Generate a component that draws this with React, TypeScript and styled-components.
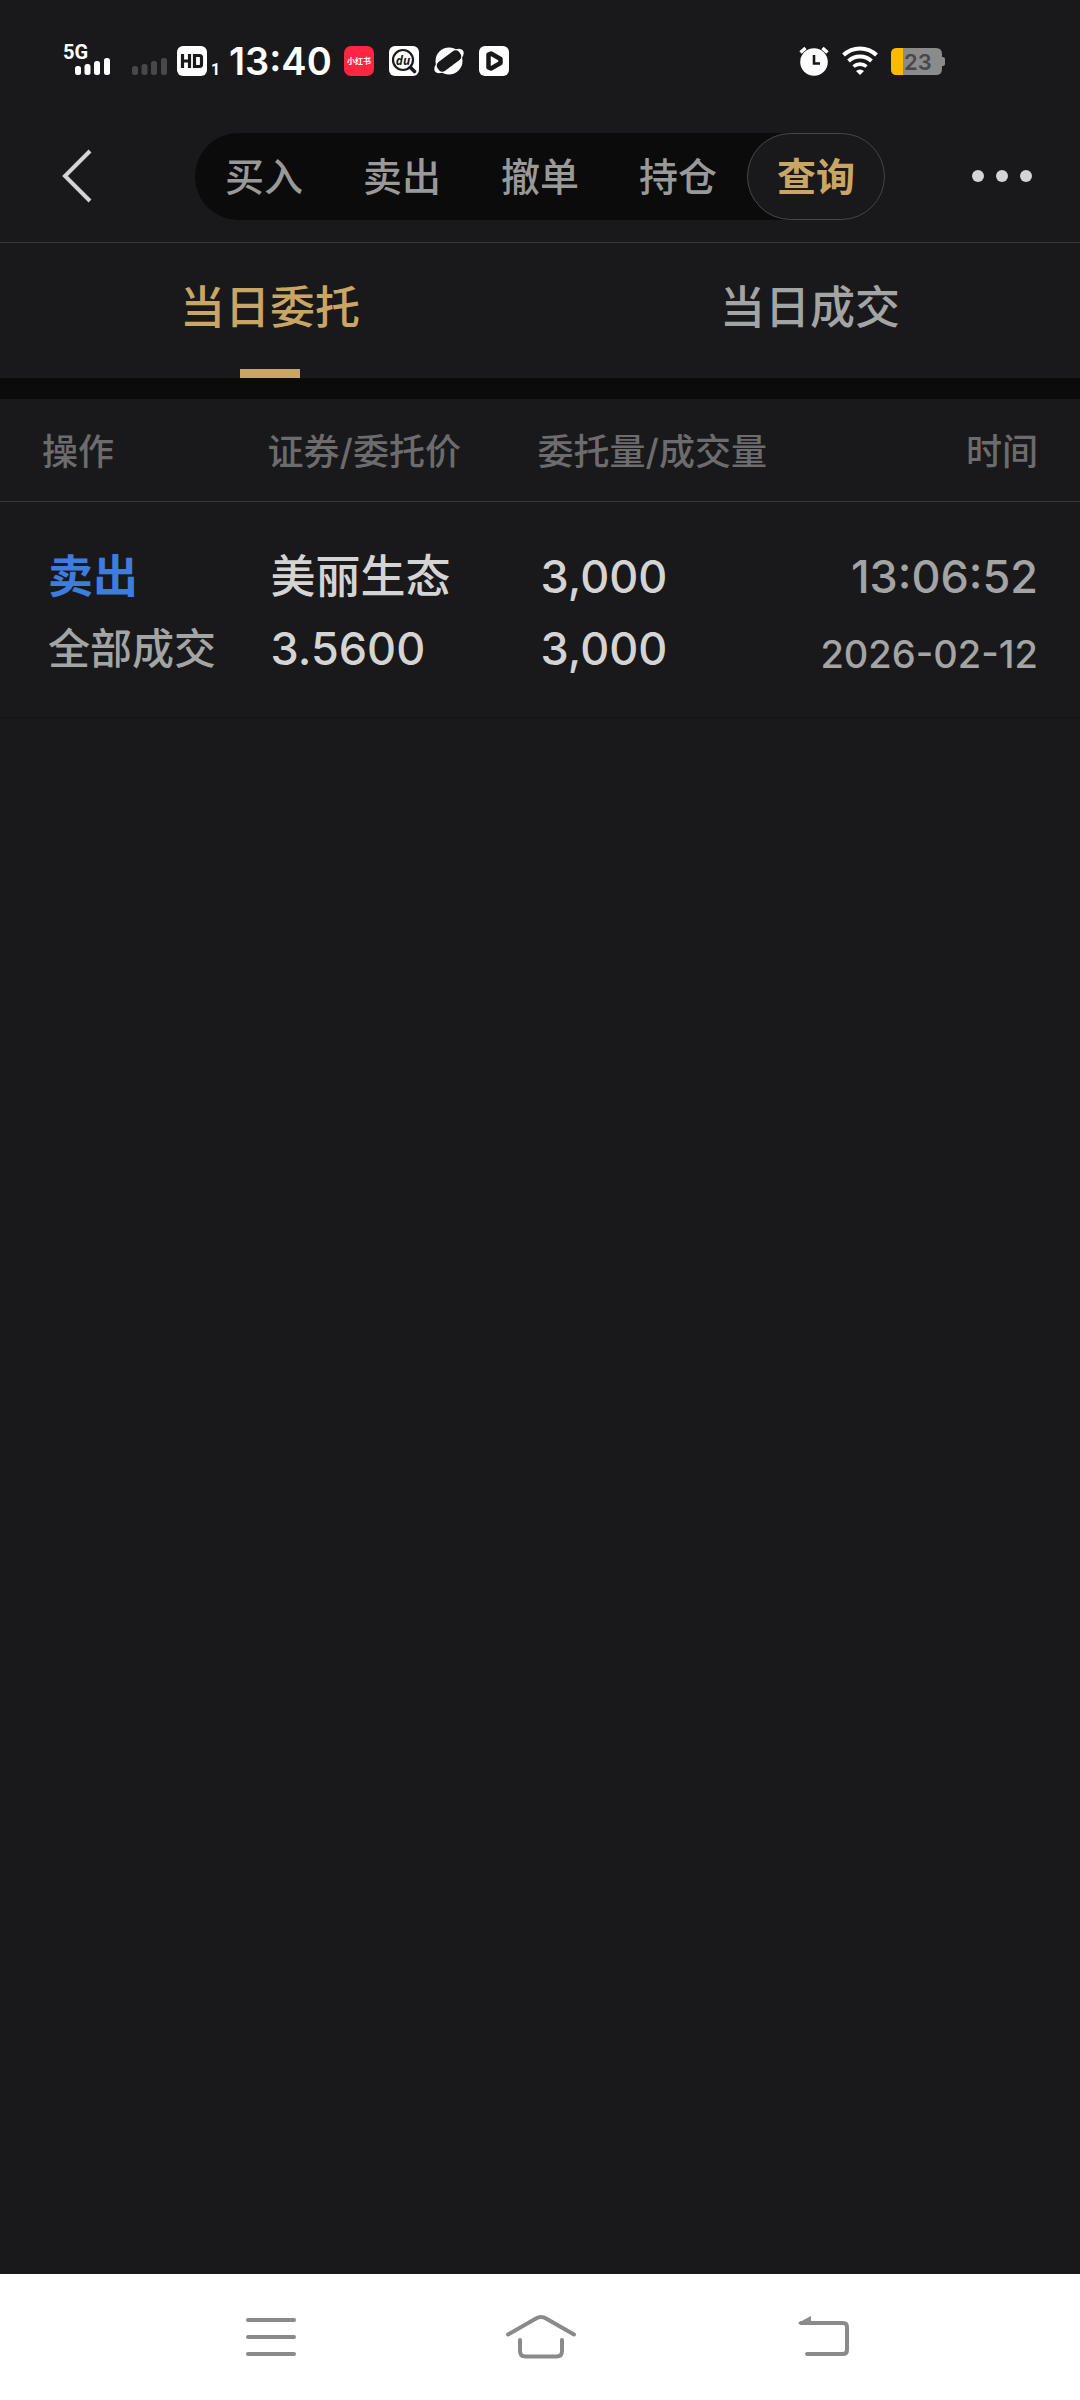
import React from "react";
import styled, { createGlobalStyle } from "styled-components";

const color = {
  page: "#19191b",
  band: "#0b0b0b",
  line: "#38383a",
  rowLine: "#121214",
  gold: "#c9a663",
  bright: "#d4d4d4",
  soft: "#a3a4a4",
  dim: "#6c6c6e",
  sell: "#3e7ce0",
  key: "#8a8a8a",
};

const GlobalStyle = createGlobalStyle`
  * { box-sizing: border-box; }
  body {
    margin: 0;
    background: ${color.page};
    font-family: Inter, "Noto Sans CJK SC", sans-serif;
  }
  button {
    margin: 0;
    padding: 0;
    border: 0;
    background: none;
    color: inherit;
    font: inherit;
    cursor: pointer;
  }
  svg { display: block; flex: none; overflow: visible; }
`;

const Screen = styled.div`
  display: flex;
  flex-direction: column;
  min-height: 100vh;
`;

const StatusBar = styled.div`
  display: flex;
  justify-content: space-between;
  align-items: center;
  height: 122px;
  padding: 0 135px 0 63px;
  color: #fff;
`;

const StatusGroup = styled.div<{ $gap: number }>`
  display: flex;
  align-items: center;
  gap: ${(p) => p.$gap}px;
`;

const Clock = styled.span`
  font-size: 38px;
  line-height: 48px;
  font-weight: 600;
`;

const TopBar = styled.header`
  display: flex;
  justify-content: space-between;
  align-items: center;
  height: 121px;
  padding: 0 36px 12px;
  border-bottom: 1px solid ${color.line};
`;

const IconButton = styled.button`
  display: flex;
  align-items: center;
  justify-content: center;
  height: 87px;
`;

const Pill = styled.nav`
  display: flex;
  border-radius: 44px;
  background: ${color.band};
`;

const PillItem = styled.button<{ $active: boolean }>`
  width: 138px;
  height: 87px;
  padding-top: 2px;
  border-radius: 44px;
  border: 1px solid ${(p) => (p.$active ? "#48484a" : "transparent")};
  background: ${(p) => (p.$active ? color.page : "transparent")};
  color: ${(p) => (p.$active ? color.gold : "#999")};
  font-size: 39px;
  line-height: 48px;
  font-weight: ${(p) => (p.$active ? 700 : 500)};
`;

const Tabs = styled.div`
  display: grid;
  grid-template-columns: 1fr 1fr;
  border-bottom: 21px solid ${color.band};
`;

const Tab = styled.button<{ $active: boolean }>`
  display: flex;
  flex-direction: column;
  align-items: center;
  justify-content: space-between;
  height: 135px;
  padding-top: 38px;
  color: ${(p) => (p.$active ? color.gold : color.soft)};
  font-size: 45px;
  line-height: 54px;
  font-weight: 500;

  &::after {
    content: "";
    width: 60px;
    height: 9px;
    background: ${(p) => (p.$active ? color.gold : "transparent")};
  }
`;

const Content = styled.main`
  flex: 1;
`;

const Orders = styled.table`
  width: 100%;
  table-layout: fixed;
  border-collapse: separate;
  border-spacing: 0;
`;

const HeadCell = styled.th<{ $width?: string; $end?: boolean }>`
  width: ${(p) => p.$width ?? "auto"};
  height: 103px;
  padding: 4px ${(p) => (p.$end ? 42 : 0)}px 0 3px;
  border-bottom: 1px solid ${color.line};
  color: ${color.dim};
  font-size: 36px;
  line-height: 48px;
  font-weight: 500;
  text-align: ${(p) => (p.$end ? "right" : "left")};
  white-space: nowrap;

  &:first-child { padding-left: 42px; }
`;

const Cell = styled.td<{ $end?: boolean }>`
  padding: 39px ${(p) => (p.$end ? 42 : 0)}px 32px 6px;
  border-bottom: 1px solid ${color.rowLine};
  text-align: ${(p) => (p.$end ? "right" : "left")};
  vertical-align: top;
  white-space: nowrap;

  &:first-child { padding-left: 48px; }
`;

const tones = {
  sell: { color: color.sell, size: 45, weight: 700 },
  main: { color: color.bright, size: 45, weight: 500 },
  state: { color: color.soft, size: 42, weight: 500 },
  time: { color: color.soft, size: 45, weight: 500 },
  date: { color: color.soft, size: 38, weight: 500 },
};

const Line = styled.div<{ $tone: keyof typeof tones }>`
  height: 72px;
  color: ${(p) => tones[p.$tone].color};
  font-size: ${(p) => tones[p.$tone].size}px;
  font-weight: ${(p) => tones[p.$tone].weight};
  line-height: ${(p) => (p.$tone === "date" ? 82 : 72)}px;
`;

const SystemKeys = styled.footer`
  display: grid;
  grid-template-columns: repeat(3, 1fr);
  height: 126px;
  padding: 0 12.5%;
  background: #fff;
`;

const SystemKey = styled.button`
  display: flex;
  align-items: center;
  justify-content: center;
`;

function Signal({ dim, label }: { dim?: boolean; label?: string }) {
  const x = label ? 12 : 0;
  return (
    <svg width={35 + x} height="30" viewBox={`0 0 ${35 + x} 30`} fill={dim ? "#48484a" : "#fff"}>
      {label && (
        <text x="0" y="13" fontFamily="Roboto, sans-serif" fontSize="20" fontWeight="700">
          {label}
        </text>
      )}
      <rect x={x} y="20" width="6" height="9" rx="2.5" />
      <rect x={x + 9.5} y="18" width="6" height="11" rx="2.5" />
      <rect x={x + 19} y="15" width="6" height="14" rx="2.5" />
      <rect x={x + 29} y="12" width="6" height="17" rx="2.5" />
    </svg>
  );
}

function HdBadge() {
  return (
    <svg width="40" height="30" viewBox="0 0 40 30">
      <rect width="30" height="30" rx="6" fill="#fff" />
      <path
        d="M5.500 8v14M12.500 8v14M5.500 15h7M17.500 9.500h5q2 0 2 2v7q0 2-2 2h-5z"
        fill="none"
        stroke={color.page}
        strokeWidth="3.200"
      />
      <text x="34" y="29" fill="#fff" fontFamily="Roboto, sans-serif" fontSize="16" fontWeight="700">
        1
      </text>
    </svg>
  );
}

function RedNoteIcon() {
  return (
    <svg width="30" height="30" viewBox="0 0 30 30">
      <rect width="30" height="30" rx="7" fill="#ff2642" />
      <text
        x="15"
        y="18"
        fill="#fff"
        textAnchor="middle"
        fontFamily="'Noto Sans CJK SC', sans-serif"
        fontSize="8"
        fontWeight="700"
      >
        小红书
      </text>
    </svg>
  );
}

function SearchAppIcon() {
  return (
    <svg width="30" height="30" viewBox="0 0 30 30">
      <rect width="30" height="30" rx="6" fill="#fff" />
      <circle cx="14" cy="14" r="10" fill="none" stroke={color.page} strokeWidth="2.200" />
      <path d="M21.500 21.500l4 4" stroke={color.page} strokeWidth="3.600" strokeLinecap="round" />
      <text
        x="14"
        y="18.500"
        fill={color.page}
        textAnchor="middle"
        fontFamily="'Open Sans', sans-serif"
        fontSize="12"
        fontStyle="italic"
        fontWeight="700"
      >
        du
      </text>
    </svg>
  );
}

function PlanetIcon() {
  return (
    <svg width="30" height="30" viewBox="0 0 30 30">
      <circle cx="15" cy="15" r="13.500" fill="#fff" />
      <g transform="rotate(-37 15 15)">
        <ellipse cx="15" cy="15" rx="17.500" ry="7.500" fill="#fff" />
        <rect x="1.500" y="9.500" width="27" height="11" rx="4.500" fill={color.page} />
      </g>
    </svg>
  );
}

function PlayIcon() {
  return (
    <svg width="30" height="30" viewBox="0 0 30 30">
      <rect width="30" height="30" rx="6" fill="#fff" />
      <path
        d="M9.500 8.500l2.500-1 9.500 5.500v4l-9.500 5.500-2.500-1z"
        fill="#fff"
        stroke={color.page}
        strokeWidth="4.500"
        strokeLinejoin="round"
      />
    </svg>
  );
}

function AlarmIcon() {
  return (
    <svg width="30" height="30" viewBox="0 0 30 30">
      <circle cx="15" cy="16" r="13.800" fill="#fff" />
      <path d="M1.500 6.500l5-4.500M28.500 6.500l-5-4.500" stroke="#fff" strokeWidth="3.400" />
      <path d="M15 9v8.500h6" fill="none" stroke={color.page} strokeWidth="2.600" />
    </svg>
  );
}

function WifiIcon() {
  return (
    <svg width="36" height="28" viewBox="0 0 36 28" fill="none" stroke="#fff" strokeWidth="4">
      <path d="M1.500 8a24 24 0 0 1 33 0" />
      <path d="M6.500 14a17 17 0 0 1 23 0" />
      <path d="M11.500 19.500a10 10 0 0 1 13 0" strokeWidth="3.600" />
      <path d="M14 24a6 6 0 0 1 8 0l-4 4z" fill="#fff" stroke="none" />
    </svg>
  );
}

function BatteryIcon() {
  return (
    <svg width="54" height="27" viewBox="0 0 54 27">
      <path d="M6 0h39q6 0 6 6v3h1q2 0 2 2v5q0 2-2 2h-1v3q0 6-6 6H6q-6 0-6-6V6q0-6 6-6z" fill="#8b8b8b" />
      <path d="M6 0h6v27H6q-6 0-6-6V6q0-6 6-6z" fill="#ffb900" />
      <text x="13" y="22" fill="#48484a" fontFamily="Inter, sans-serif" fontSize="22" fontWeight="600">
        23
      </text>
    </svg>
  );
}

const sections = ["买入", "卖出", "撤单", "持仓", "查询"];
const tabs = ["当日委托", "当日成交"];

const orders = [
  {
    side: "卖出",
    state: "全部成交",
    name: "美丽生态",
    price: "3.5600",
    ordered: "3,000",
    filled: "3,000",
    time: "13:06:52",
    date: "2026-02-12",
  },
];

export default function App() {
  const [section, setSection] = React.useState("查询");
  const [tab, setTab] = React.useState("当日委托");

  return (
    <Screen>
      <GlobalStyle />
      <StatusBar>
        <StatusGroup $gap={12}>
          <StatusGroup $gap={22}>
            <Signal label="5G" />
            <StatusGroup $gap={10}>
              <Signal dim />
              <HdBadge />
            </StatusGroup>
          </StatusGroup>
          <Clock>13:40</Clock>
          <StatusGroup $gap={15}>
            <RedNoteIcon />
            <SearchAppIcon />
            <PlanetIcon />
            <PlayIcon />
          </StatusGroup>
        </StatusGroup>
        <StatusGroup $gap={13}>
          <AlarmIcon />
          <WifiIcon />
          <BatteryIcon />
        </StatusGroup>
      </StatusBar>

      <TopBar>
        <IconButton aria-label="返回">
          <svg width="84" height="54" viewBox="0 0 84 54" fill="none" stroke={color.bright} strokeWidth="4">
            <path d="M54 2L29 27l25 25" />
          </svg>
        </IconButton>
        <Pill>
          {sections.map((name) => (
            <PillItem key={name} $active={name === section} onClick={() => setSection(name)}>
              {name}
            </PillItem>
          ))}
        </Pill>
        <IconButton aria-label="更多">
          <svg width="84" height="12" viewBox="0 0 84 12" fill={color.bright}>
            <circle cx="18" cy="6" r="6" />
            <circle cx="42" cy="6" r="6" />
            <circle cx="66" cy="6" r="6" />
          </svg>
        </IconButton>
      </TopBar>

      <Tabs>
        {tabs.map((name) => (
          <Tab key={name} $active={name === tab} onClick={() => setTab(name)}>
            {name}
          </Tab>
        ))}
      </Tabs>

      <Content>
        <Orders>
          <thead>
            <tr>
              <HeadCell $width="24.5%">操作</HeadCell>
              <HeadCell $width="25%">证券/委托价</HeadCell>
              <HeadCell $width="25%">委托量/成交量</HeadCell>
              <HeadCell $end>时间</HeadCell>
            </tr>
          </thead>
          <tbody>
            {orders.map((o) => (
              <tr key={o.date + o.time}>
                <Cell>
                  <Line $tone="sell">{o.side}</Line>
                  <Line $tone="state">{o.state}</Line>
                </Cell>
                <Cell>
                  <Line $tone="main">{o.name}</Line>
                  <Line $tone="main">{o.price}</Line>
                </Cell>
                <Cell>
                  <Line $tone="main">{o.ordered}</Line>
                  <Line $tone="main">{o.filled}</Line>
                </Cell>
                <Cell $end>
                  <Line $tone="time">{o.time}</Line>
                  <Line $tone="date">{o.date}</Line>
                </Cell>
              </tr>
            ))}
          </tbody>
        </Orders>
      </Content>

      <SystemKeys>
        <SystemKey aria-label="最近任务">
          <svg width="48" height="44" viewBox="0 0 48 44" stroke={color.key} strokeWidth="4" strokeLinecap="round">
            <path d="M2 5h46M2 22h46M2 39h46" />
          </svg>
        </SystemKey>
        <SystemKey aria-label="主屏幕">
          <svg width="68" height="44" viewBox="0 0 68 44" fill="none" stroke={color.key} strokeWidth="4" strokeLinecap="round" strokeLinejoin="round">
            <path d="M2 19.500L30 3.500q5-3 10 0L68 19.500" />
            <path d="M14 25v11q0 5.500 5.500 5.500h31q5.500 0 5.500-5.500V25" />
          </svg>
        </SystemKey>
        <SystemKey aria-label="后退">
          <svg width="78" height="44" viewBox="0 0 78 44" fill="none" stroke={color.key} strokeWidth="4" strokeLinecap="round">
            <path d="M30 8h42q4 0 4 4v23q0 4-4 4H36" />
            <path d="M27 8L40 1v8H28z" fill={color.key} stroke="none" />
          </svg>
        </SystemKey>
      </SystemKeys>
    </Screen>
  );
}
